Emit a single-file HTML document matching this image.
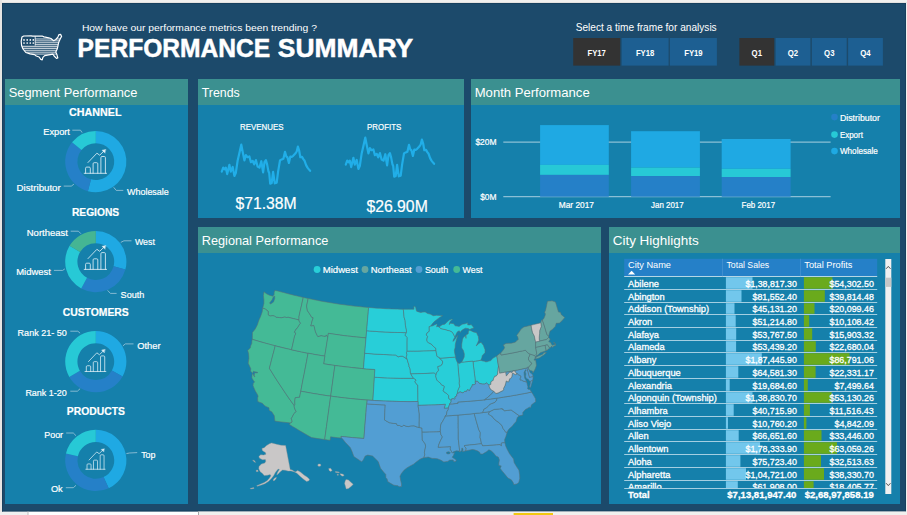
<!DOCTYPE html>
<html lang="en"><head><meta charset="utf-8"><title>Performance Summary</title>
<style>
html,body{margin:0;padding:0;background:#f1f0ee;}
body{width:907px;height:515px;overflow:hidden;}
svg{display:block;font-family:"Liberation Sans","DejaVu Sans",sans-serif;fill:#fff;}
svg text{fill:#fff;}
.tb text{stroke:#fff;stroke-width:0.3px;}
.lb text{stroke:#fff;stroke-width:0.2px;}
</style></head><body>
<svg width="907" height="515" viewBox="0 0 907 515">
<rect x="0.0" y="0.0" width="907.0" height="3.0" fill="#f1f0ee"/>
<rect x="0.0" y="2.0" width="907.0" height="1.0" fill="#e4e2e0"/>
<rect x="0.0" y="0.0" width="2.0" height="515.0" fill="#e6e5e3"/>
<rect x="2.0" y="3.0" width="904.0" height="508.5" fill="#1c4a6b"/>
<rect x="0.0" y="511.5" width="28.0" height="3.5" fill="#f0f0f0"/>
<rect x="28.0" y="511.5" width="170.5" height="3.5" fill="#ffffff"/>
<rect x="371.2" y="511.5" width="1.0" height="3.5" fill="#bdbdbd"/>
<rect x="2.0" y="510.5" width="904.0" height="1.0" fill="#173e5c"/>
<rect x="2.0" y="3.0" width="904.0" height="0.8" fill="#173e5c"/>
<rect x="2.0" y="3.0" width="0.8" height="508.5" fill="#173e5c"/>
<rect x="905.2" y="3.0" width="0.8" height="508.5" fill="#173e5c"/>
<rect x="198.5" y="511.5" width="708.5" height="3.5" fill="#f1f0ee"/>
<rect x="27.5" y="511.5" width="1.0" height="3.5" fill="#bdbdbd"/>
<rect x="198.0" y="511.5" width="1.0" height="3.5" fill="#a8a8a8"/>
<rect x="513.6" y="513.0" width="39.4" height="2.0" fill="#f2c811"/>
<rect x="5.0" y="79.0" width="183.0" height="425.0" fill="#1580ab"/>
<rect x="5.0" y="79.0" width="183.0" height="26.0" fill="#3b9090"/>
<text x="8.7" y="96.8" font-size="12.80" textLength="128.7" lengthAdjust="spacingAndGlyphs">Segment Performance</text>
<rect x="198.0" y="79.0" width="266.0" height="139.0" fill="#1580ab"/>
<rect x="198.0" y="79.0" width="266.0" height="26.0" fill="#3b9090"/>
<text x="201.7" y="96.8" font-size="12.80" textLength="38.0" lengthAdjust="spacingAndGlyphs">Trends</text>
<rect x="471.0" y="79.0" width="429.0" height="139.0" fill="#1580ab"/>
<rect x="471.0" y="79.0" width="429.0" height="26.0" fill="#3b9090"/>
<text x="474.7" y="96.8" font-size="12.80" textLength="115.0" lengthAdjust="spacingAndGlyphs">Month Performance</text>
<rect x="198.0" y="227.0" width="403.0" height="277.0" fill="#1580ab"/>
<rect x="198.0" y="227.0" width="403.0" height="26.0" fill="#3b9090"/>
<text x="201.7" y="244.8" font-size="12.80" textLength="126.7" lengthAdjust="spacingAndGlyphs">Regional Performance</text>
<rect x="609.0" y="227.0" width="291.0" height="277.0" fill="#1580ab"/>
<rect x="609.0" y="227.0" width="291.0" height="26.0" fill="#3b9090"/>
<text x="612.7" y="244.8" font-size="12.80" textLength="86.0" lengthAdjust="spacingAndGlyphs">City Highlights</text>
<text x="81.9" y="31.0" font-size="9.50" textLength="235.0" lengthAdjust="spacingAndGlyphs">How have our performance metrics been trending ?</text>
<text x="77.6" y="57.0" font-size="25.20" textLength="192.6" lengthAdjust="spacingAndGlyphs" font-weight="bold" stroke="#fff" stroke-width="0.5">PERFORMANCE</text>
<text x="277.8" y="57.0" font-size="25.20" textLength="135.4" lengthAdjust="spacingAndGlyphs" font-weight="bold" stroke="#fff" stroke-width="0.5">SUMMARY</text>
<text x="575.7" y="31.3" font-size="10.20" textLength="141.0" lengthAdjust="spacingAndGlyphs">Select a time frame for analysis</text>
<rect x="573.2" y="38.0" width="47.0" height="27.6" fill="#333333"/>
<text x="587.5" y="56.3" font-size="9.00" textLength="18.4" lengthAdjust="spacingAndGlyphs" font-weight="bold">FY17</text>
<rect x="621.6" y="38.0" width="47.0" height="27.6" fill="#1d5f92"/>
<text x="635.9" y="56.3" font-size="9.00" textLength="18.4" lengthAdjust="spacingAndGlyphs" font-weight="bold">FY18</text>
<rect x="669.9" y="38.0" width="47.0" height="27.6" fill="#1d5f92"/>
<text x="684.2" y="56.3" font-size="9.00" textLength="18.4" lengthAdjust="spacingAndGlyphs" font-weight="bold">FY19</text>
<rect x="739.4" y="38.0" width="34.8" height="27.6" fill="#333333"/>
<text x="751.6" y="56.3" font-size="9.00" textLength="10.4" lengthAdjust="spacingAndGlyphs" font-weight="bold">Q1</text>
<rect x="775.6" y="38.0" width="34.8" height="27.6" fill="#1d5f92"/>
<text x="787.8" y="56.3" font-size="9.00" textLength="10.4" lengthAdjust="spacingAndGlyphs" font-weight="bold">Q2</text>
<rect x="811.9" y="38.0" width="34.8" height="27.6" fill="#1d5f92"/>
<text x="824.1" y="56.3" font-size="9.00" textLength="10.4" lengthAdjust="spacingAndGlyphs" font-weight="bold">Q3</text>
<rect x="848.1" y="38.0" width="34.8" height="27.6" fill="#1d5f92"/>
<text x="860.3" y="56.3" font-size="9.00" textLength="10.4" lengthAdjust="spacingAndGlyphs" font-weight="bold">Q4</text>
<clipPath id="ic"><polygon points="21.9,37.1 23.7,36.0 31.0,35.8 32.8,36.2 42.6,36.2 44.0,36.9 48.8,37.8 50.9,38.5 53.7,40.7 55.8,39.5 57.9,37.1 59.0,34.6 60.7,34.4 61.6,36.4 60.4,38.5 59.3,40.9 58.5,43.0 57.9,46.2 57.2,49.0 55.8,52.1 56.9,54.6 57.8,58.0 56.5,58.4 54.1,56.0 53.0,54.2 48.8,54.9 44.7,55.6 42.9,57.4 42.2,59.8 40.8,59.4 39.1,57.0 36.3,56.0 34.5,54.6 30.0,53.9 25.8,52.5 23.0,49.0 21.6,45.5 21.2,41.3"/></clipPath>
<g clip-path="url(#ic)" stroke="#fff" stroke-width="0.8" fill="none">
<path d="M35.2,38.97H66"/>
<path d="M35.2,40.86H66"/>
<path d="M35.2,42.74H66"/>
<path d="M35.2,44.63H66"/>
<path d="M18,46.52H66" stroke="#b9c6d0" stroke-width="1.3"/>
<path d="M18.0,48.41H66"/>
<path d="M18.0,50.29H66"/>
<path d="M18.0,52.18H66"/>
<path d="M18.0,54.07H66"/>
<path d="M35.2,35V45.6"/>
</g>
<circle cx="24.0" cy="39.9" r="0.85" fill="#fff"/>
<circle cx="27.2" cy="39.9" r="0.85" fill="#fff"/>
<circle cx="30.3" cy="39.9" r="0.85" fill="#fff"/>
<circle cx="33.3" cy="39.9" r="0.85" fill="#fff"/>
<circle cx="24.0" cy="43.0" r="0.85" fill="#fff"/>
<circle cx="27.2" cy="43.0" r="0.85" fill="#fff"/>
<circle cx="30.3" cy="43.0" r="0.85" fill="#fff"/>
<circle cx="33.3" cy="43.0" r="0.85" fill="#fff"/>
<polygon points="21.9,37.1 23.7,36.0 31.0,35.8 32.8,36.2 42.6,36.2 44.0,36.9 48.8,37.8 50.9,38.5 53.7,40.7 55.8,39.5 57.9,37.1 59.0,34.6 60.7,34.4 61.6,36.4 60.4,38.5 59.3,40.9 58.5,43.0 57.9,46.2 57.2,49.0 55.8,52.1 56.9,54.6 57.8,58.0 56.5,58.4 54.1,56.0 53.0,54.2 48.8,54.9 44.7,55.6 42.9,57.4 42.2,59.8 40.8,59.4 39.1,57.0 36.3,56.0 34.5,54.6 30.0,53.9 25.8,52.5 23.0,49.0 21.6,45.5 21.2,41.3" fill="none" stroke="#fff" stroke-width="1.2" stroke-linejoin="round"/>
<g class="lb">
<text x="69.1" y="116.2" font-size="11.40" textLength="52.4" lengthAdjust="spacingAndGlyphs" font-weight="bold">CHANNEL</text>
<path d="M95.80,131.00 A30.60,30.60 0 1 1 87.88,191.16 L91.04,179.37 A18.40,18.40 0 1 0 95.80,143.20 Z" fill="#1fa9e3"/>
<path d="M87.88,191.16 A30.60,30.60 0 0 1 72.02,142.34 L81.50,150.02 A18.40,18.40 0 0 0 91.04,179.37 Z" fill="#2580c8"/>
<path d="M72.02,142.34 A30.60,30.60 0 0 1 95.80,131.00 L95.80,143.20 A18.40,18.40 0 0 0 81.50,150.02 Z" fill="#27c9d6"/>
<g transform="translate(95.8,165.1) scale(1.00)" fill="none" stroke="#dcedf5" stroke-width="0.85" stroke-linejoin="round" stroke-linecap="round">
<path d="M-11.6,8.2H10.8"/>
<path d="M-10.2,8.2V3.1a1.1,1.1 0 0 1 1.1,-1.1h2.5a1.1,1.1 0 0 1 1.1,1.1V8.2M-2.7,8.2V-1.3a1.1,1.1 0 0 1 1.1,-1.1h2.5a1.1,1.1 0 0 1 1.1,1.1V8.2M5.1,8.2V-7.5a1.1,1.1 0 0 1 1.1,-1.1h2.3a1.1,1.1 0 0 1 1.1,1.1V8.2"/>
<path d="M-7.8,-2.6L1.1,-11.9L3.9,-9.9L8.4,-14.3"/>
<path d="M9.8,-15.6L6.2,-14.9L9,-12.1Z" fill="#dcedf5" stroke-width="0.4"/>
</g>
<text x="43.3" y="135.1" font-size="9.80" textLength="26.6" lengthAdjust="spacingAndGlyphs">Export</text>
<polyline points="72.3,130.2 80.5,130.2 82.1,132.6" fill="none" stroke="#9fc6da" stroke-width="0.8"/>
<text x="16.6" y="190.8" font-size="9.80" textLength="44.1" lengthAdjust="spacingAndGlyphs">Distributor</text>
<polyline points="63.7,186.1 71.3,186.1 73.9,184.2" fill="none" stroke="#9fc6da" stroke-width="0.8"/>
<text x="127.0" y="194.8" font-size="9.80" textLength="41.8" lengthAdjust="spacingAndGlyphs">Wholesale</text>
<polyline points="123.3,190.4 116.2,190.4 113.7,187.3" fill="none" stroke="#9fc6da" stroke-width="0.8"/>
<text x="71.9" y="215.9" font-size="11.40" textLength="47.3" lengthAdjust="spacingAndGlyphs" font-weight="bold">REGIONS</text>
<path d="M95.80,231.00 A30.60,30.60 0 0 1 125.36,269.52 L113.57,266.36 A18.40,18.40 0 0 0 95.80,243.20 Z" fill="#1fa9e3"/>
<path d="M125.36,269.52 A30.60,30.60 0 0 1 81.20,288.49 L87.02,277.77 A18.40,18.40 0 0 0 113.57,266.36 Z" fill="#2580c8"/>
<path d="M81.20,288.49 A30.60,30.60 0 0 1 69.57,245.84 L80.03,252.12 A18.40,18.40 0 0 0 87.02,277.77 Z" fill="#27c9d6"/>
<path d="M69.57,245.84 A30.60,30.60 0 0 1 95.80,231.00 L95.80,243.20 A18.40,18.40 0 0 0 80.03,252.12 Z" fill="#45b593"/>
<g transform="translate(95.8,261.2) scale(1.00)" fill="none" stroke="#dcedf5" stroke-width="0.85" stroke-linejoin="round" stroke-linecap="round">
<path d="M-11.6,8.2H10.8"/>
<path d="M-10.2,8.2V3.1a1.1,1.1 0 0 1 1.1,-1.1h2.5a1.1,1.1 0 0 1 1.1,1.1V8.2M-2.7,8.2V-1.3a1.1,1.1 0 0 1 1.1,-1.1h2.5a1.1,1.1 0 0 1 1.1,1.1V8.2M5.1,8.2V-7.5a1.1,1.1 0 0 1 1.1,-1.1h2.3a1.1,1.1 0 0 1 1.1,1.1V8.2"/>
<path d="M-7.8,-2.6L1.1,-11.9L3.9,-9.9L8.4,-14.3"/>
<path d="M9.8,-15.6L6.2,-14.9L9,-12.1Z" fill="#dcedf5" stroke-width="0.4"/>
</g>
<text x="26.8" y="236.1" font-size="9.80" textLength="41.0" lengthAdjust="spacingAndGlyphs">Northeast</text>
<polyline points="70.7,231.2 78.4,231.2 80.9,233.7" fill="none" stroke="#9fc6da" stroke-width="0.8"/>
<text x="134.9" y="244.9" font-size="9.80" textLength="20.0" lengthAdjust="spacingAndGlyphs">West</text>
<polyline points="131.5,240.8 123.9,240.8 120.8,242.4" fill="none" stroke="#9fc6da" stroke-width="0.8"/>
<text x="16.2" y="274.9" font-size="9.80" textLength="34.7" lengthAdjust="spacingAndGlyphs">Midwest</text>
<polyline points="53.9,270.4 62.7,270.4 64.8,268.9" fill="none" stroke="#9fc6da" stroke-width="0.8"/>
<text x="120.6" y="297.9" font-size="9.80" textLength="23.7" lengthAdjust="spacingAndGlyphs">South</text>
<polyline points="116.6,293.4 110.4,293.4 107.6,290.4" fill="none" stroke="#9fc6da" stroke-width="0.8"/>
<text x="62.7" y="315.9" font-size="11.40" textLength="66.1" lengthAdjust="spacingAndGlyphs" font-weight="bold">CUSTOMERS</text>
<path d="M95.80,331.00 A30.60,30.60 0 0 1 122.56,376.44 L111.89,370.52 A18.40,18.40 0 0 0 95.80,343.20 Z" fill="#1fa9e3"/>
<path d="M122.56,376.44 A30.60,30.60 0 0 1 69.30,376.90 L79.87,370.80 A18.40,18.40 0 0 0 111.89,370.52 Z" fill="#2580c8"/>
<path d="M69.30,376.90 A30.60,30.60 0 0 1 95.80,331.00 L95.80,343.20 A18.40,18.40 0 0 0 79.87,370.80 Z" fill="#27c9d6"/>
<g transform="translate(95.8,363.9) scale(0.93)" fill="none" stroke="#dcedf5" stroke-width="0.85" stroke-linejoin="round" stroke-linecap="round">
<path d="M-11.6,8.2H10.8"/>
<path d="M-10.2,8.2V3.1a1.1,1.1 0 0 1 1.1,-1.1h2.5a1.1,1.1 0 0 1 1.1,1.1V8.2M-2.7,8.2V-1.3a1.1,1.1 0 0 1 1.1,-1.1h2.5a1.1,1.1 0 0 1 1.1,1.1V8.2M5.1,8.2V-7.5a1.1,1.1 0 0 1 1.1,-1.1h2.3a1.1,1.1 0 0 1 1.1,1.1V8.2"/>
<path d="M-7.8,-2.6L1.1,-11.9L3.9,-9.9L8.4,-14.3"/>
<path d="M9.8,-15.6L6.2,-14.9L9,-12.1Z" fill="#dcedf5" stroke-width="0.4"/>
</g>
<text x="17.6" y="336.1" font-size="9.80" textLength="49.2" lengthAdjust="spacingAndGlyphs">Rank 21- 50</text>
<polyline points="70.3,331.2 77.8,331.2 80.1,333.2" fill="none" stroke="#9fc6da" stroke-width="0.8"/>
<text x="137.2" y="349.0" font-size="9.80" textLength="23.4" lengthAdjust="spacingAndGlyphs">Other</text>
<polyline points="133.5,343.9 125.3,343.9 122.9,345.9" fill="none" stroke="#9fc6da" stroke-width="0.8"/>
<text x="25.4" y="395.9" font-size="9.80" textLength="41.4" lengthAdjust="spacingAndGlyphs">Rank 1-20</text>
<polyline points="70.3,391.2 77.4,391.2 80.1,388.7" fill="none" stroke="#9fc6da" stroke-width="0.8"/>
<text x="66.8" y="414.9" font-size="11.40" textLength="58.1" lengthAdjust="spacingAndGlyphs" font-weight="bold">PRODUCTS</text>
<path d="M95.80,429.80 A30.60,30.60 0 0 1 108.73,488.13 L103.58,477.08 A18.40,18.40 0 0 0 95.80,442.00 Z" fill="#1fa9e3"/>
<path d="M108.73,488.13 A30.60,30.60 0 0 1 65.98,453.52 L77.87,456.26 A18.40,18.40 0 0 0 103.58,477.08 Z" fill="#2580c8"/>
<path d="M65.98,453.52 A30.60,30.60 0 0 1 95.80,429.80 L95.80,442.00 A18.40,18.40 0 0 0 77.87,456.26 Z" fill="#27c9d6"/>
<g transform="translate(95.8,462.2) scale(0.86)" fill="none" stroke="#dcedf5" stroke-width="0.85" stroke-linejoin="round" stroke-linecap="round">
<path d="M-11.6,8.2H10.8"/>
<path d="M-10.2,8.2V3.1a1.1,1.1 0 0 1 1.1,-1.1h2.5a1.1,1.1 0 0 1 1.1,1.1V8.2M-2.7,8.2V-1.3a1.1,1.1 0 0 1 1.1,-1.1h2.5a1.1,1.1 0 0 1 1.1,1.1V8.2M5.1,8.2V-7.5a1.1,1.1 0 0 1 1.1,-1.1h2.3a1.1,1.1 0 0 1 1.1,1.1V8.2"/>
<path d="M-7.8,-2.6L1.1,-11.9L3.9,-9.9L8.4,-14.3"/>
<path d="M9.8,-15.6L6.2,-14.9L9,-12.1Z" fill="#dcedf5" stroke-width="0.4"/>
</g>
<text x="44.2" y="438.1" font-size="9.80" textLength="18.9" lengthAdjust="spacingAndGlyphs">Poor</text>
<polyline points="66.2,433.0 73.3,433.0 76.0,435.7" fill="none" stroke="#9fc6da" stroke-width="0.8"/>
<text x="141.2" y="458.1" font-size="9.80" textLength="14.3" lengthAdjust="spacingAndGlyphs">Top</text>
<polyline points="137.2,452.6 129.4,453.0 126.4,453.6" fill="none" stroke="#9fc6da" stroke-width="0.8"/>
<text x="50.9" y="491.8" font-size="9.80" textLength="11.8" lengthAdjust="spacingAndGlyphs">Ok</text>
<polyline points="65.8,487.7 73.3,487.7 76.0,485.3" fill="none" stroke="#9fc6da" stroke-width="0.8"/>
<text x="240.0" y="129.6" font-size="8.80" textLength="43.5" lengthAdjust="spacingAndGlyphs">REVENUES</text>
<text x="367.1" y="129.6" font-size="8.80" textLength="34.1" lengthAdjust="spacingAndGlyphs">PROFITS</text>
<text x="235.5" y="208.8" font-size="16.40" textLength="61.2" lengthAdjust="spacingAndGlyphs" stroke="#fff" stroke-width="0.45">$71.38M</text>
<text x="366.4" y="211.7" font-size="16.40" textLength="61.4" lengthAdjust="spacingAndGlyphs" stroke="#fff" stroke-width="0.45">$26.90M</text>
<polyline points="221.8,171.6 223.2,167.6 224.7,169.4 225.8,167.6 227.2,174.1 229.4,164.8 230.8,171.6 232.7,167.0 234.4,175.9 235.8,173.0 237.6,160.8 239.4,152.9 241.3,144.6 242.6,151.5 244.4,160.4 245.9,155.1 247.6,157.2 249.4,156.5 250.9,162.2 252.7,160.8 254.2,164.4 255.9,160.1 257.6,166.5 259.5,167.6 261.3,161.2 263.1,172.3 264.5,162.2 265.9,160.1 267.1,164.4 268.5,171.6 269.2,173.0 270.2,183.7 271.7,183.0 273.1,171.9 274.8,183.3 276.7,182.7 278.1,171.6 280.0,160.4 281.7,159.4 283.4,158.7 285.0,151.8 286.3,156.5 287.4,157.2 288.9,163.0 290.3,156.5 291.7,156.9 293.2,155.8 295.3,153.6 296.7,151.5 297.9,146.5 299.2,150.8 300.3,157.2 302.0,156.9 303.5,159.4 304.6,160.8 306.1,165.1 307.5,167.6 308.9,169.4 310.1,170.8" fill="none" stroke="#21aee8" stroke-width="2.2" stroke-linejoin="round" stroke-linecap="round"/>
<polyline transform="translate(124,-7)" points="221.8,171.6 223.2,167.6 224.7,169.4 225.8,167.6 227.2,174.1 229.4,164.8 230.8,171.6 232.7,167.0 234.4,175.9 235.8,173.0 237.6,160.8 239.4,152.9 241.3,144.6 242.6,151.5 244.4,160.4 245.9,155.1 247.6,157.2 249.4,156.5 250.9,162.2 252.7,160.8 254.2,164.4 255.9,160.1 257.6,166.5 259.5,167.6 261.3,161.2 263.1,172.3 264.5,162.2 265.9,160.1 267.1,164.4 268.5,171.6 269.2,173.0 270.2,183.7 271.7,183.0 273.1,171.9 274.8,183.3 276.7,182.7 278.1,171.6 280.0,160.4 281.7,159.4 283.4,158.7 285.0,151.8 286.3,156.5 287.4,157.2 288.9,163.0 290.3,156.5 291.7,156.9 293.2,155.8 295.3,153.6 296.7,151.5 297.9,146.5 299.2,150.8 300.3,157.2 302.0,156.9 303.5,159.4 304.6,160.8 306.1,165.1 307.5,167.6 308.9,169.4 310.1,170.8" fill="none" stroke="#21aee8" stroke-width="2.2" stroke-linejoin="round" stroke-linecap="round"/>
<rect x="503.3" y="141.6" width="327.3" height="1.0" fill="#a9cfe0"/>
<rect x="503.3" y="196.2" width="327.3" height="1.0" fill="#a9cfe0"/>
<text x="475.4" y="145.0" font-size="8.40" textLength="21.1" lengthAdjust="spacingAndGlyphs">$20M</text>
<text x="480.2" y="200.1" font-size="8.40" textLength="16.3" lengthAdjust="spacingAndGlyphs">$0M</text>
<rect x="540.1" y="125.1" width="68.7" height="39.8" fill="#1fa9e3"/>
<rect x="540.1" y="164.9" width="68.7" height="10.0" fill="#27c9d6"/>
<rect x="540.1" y="174.9" width="68.7" height="21.8" fill="#2580c8"/>
<rect x="631.1" y="131.2" width="68.8" height="36.4" fill="#1fa9e3"/>
<rect x="631.1" y="167.6" width="68.8" height="8.5" fill="#27c9d6"/>
<rect x="631.1" y="176.1" width="68.8" height="20.6" fill="#2580c8"/>
<rect x="721.7" y="139.0" width="68.9" height="29.8" fill="#1fa9e3"/>
<rect x="721.7" y="168.8" width="68.9" height="8.2" fill="#27c9d6"/>
<rect x="721.7" y="177.0" width="68.9" height="19.7" fill="#2580c8"/>
<text x="558.8" y="207.6" font-size="8.40" textLength="35.2" lengthAdjust="spacingAndGlyphs">Mar 2017</text>
<text x="651.0" y="207.6" font-size="8.40" textLength="32.7" lengthAdjust="spacingAndGlyphs">Jan 2017</text>
<text x="741.6" y="207.6" font-size="8.40" textLength="33.5" lengthAdjust="spacingAndGlyphs">Feb 2017</text>
<circle cx="834.5" cy="117.1" r="3.3" fill="#2580c8"/>
<text x="839.9" y="120.8" font-size="8.60" textLength="40.0" lengthAdjust="spacingAndGlyphs">Distributor</text>
<circle cx="834.5" cy="134.6" r="3.3" fill="#27c9d6"/>
<text x="839.9" y="137.7" font-size="8.60" textLength="23.0" lengthAdjust="spacingAndGlyphs">Export</text>
<circle cx="834.5" cy="151.1" r="3.3" fill="#1fa9e3"/>
<text x="839.9" y="154.0" font-size="8.60" textLength="38.0" lengthAdjust="spacingAndGlyphs">Wholesale</text>
<circle cx="317.1" cy="269.5" r="3.4" fill="#28ced8"/>
<text x="322.7" y="273.1" font-size="9.90" textLength="35.2" lengthAdjust="spacingAndGlyphs">Midwest</text>
<circle cx="365.0" cy="269.5" r="3.4" fill="#66a6a0"/>
<text x="370.8" y="273.1" font-size="9.90" textLength="40.9" lengthAdjust="spacingAndGlyphs">Northeast</text>
<circle cx="419.0" cy="269.5" r="3.4" fill="#529ed3"/>
<text x="424.9" y="273.1" font-size="9.90" textLength="23.4" lengthAdjust="spacingAndGlyphs">South</text>
<circle cx="456.7" cy="269.5" r="3.4" fill="#44ba96"/>
<text x="462.6" y="273.1" font-size="9.90" textLength="19.9" lengthAdjust="spacingAndGlyphs">West</text>
</g>
<g stroke="#5a6f74" stroke-width="0.55" stroke-linejoin="round">
<g fill="#44ba96">
<path d="M262.7,308.2 263.4,305.4 263.9,303.5 263.9,299.9 263.4,295.4 264.0,291.8 266.1,293.5 267.8,294.4 269.6,295.3 271.2,295.7 272.8,296.2 274.1,294.6 274.2,292.3 274.9,290.4 277.9,291.0 280.7,291.8 283.5,292.5 286.3,293.3 289.1,294.0 292.0,294.7 294.8,295.4 297.6,296.1 300.5,296.8 303.3,297.4 302.4,301.3 301.6,305.1 300.7,308.9 299.8,312.7 299.0,316.6 299.0,318.3 298.9,319.9 296.2,319.3 293.5,318.6 290.8,318.0 288.2,317.3 286.4,317.5 284.8,317.1 283.1,317.4 281.3,317.8 279.7,317.6 277.6,317.4 275.9,317.3 274.6,316.0 272.5,315.7 270.1,316.1 268.0,314.7 268.2,313.0 268.2,311.3 266.8,310.4 265.5,309.0Z"/>
<path d="M262.7,308.2 265.5,309.0 266.8,310.4 268.2,311.3 268.2,313.0 268.0,314.7 270.1,316.1 272.5,315.7 274.6,316.0 275.9,317.3 277.6,317.4 279.7,317.6 281.3,317.8 283.1,317.4 284.8,317.1 286.4,317.5 288.2,317.3 290.8,318.0 293.5,318.6 296.2,319.3 298.9,319.9 299.3,321.4 300.6,323.2 299.6,324.3 298.8,325.8 297.5,327.7 297.0,328.6 296.1,329.1 294.4,332.2 295.7,332.9 295.4,334.6 294.6,336.2 293.6,340.7 292.6,345.2 291.5,349.8 288.2,349.0 285.0,348.2 281.7,347.4 278.4,346.6 275.1,345.8 271.8,344.9 268.5,344.1 265.3,343.2 262.0,342.2 258.8,341.3 255.5,340.3 252.3,339.4 252.4,335.4 252.4,332.6 255.2,329.0 256.3,326.9 257.4,324.8 258.2,322.2 259.1,319.7 260.7,316.2 262.2,311.8Z"/>
<path d="M274.9,421.1 274.6,418.5 274.3,415.7 271.9,411.9 269.1,410.2 269.0,407.8 266.9,406.9 264.9,405.9 262.3,403.2 260.0,402.4 257.8,401.6 257.6,398.0 258.1,396.1 257.1,393.9 255.3,391.0 254.1,388.2 253.0,385.5 253.3,383.2 254.6,381.9 253.4,380.4 251.9,378.0 252.0,375.6 252.6,373.3 250.5,371.1 250.8,368.8 249.5,366.0 248.2,363.2 248.5,360.9 248.9,358.5 248.8,356.1 248.6,353.6 247.7,350.6 250.4,347.7 250.6,346.1 251.8,343.2 251.8,341.2 252.3,339.4 255.1,340.2 258.0,341.1 260.8,341.9 263.7,342.7 266.6,343.5 269.5,344.3 272.3,345.1 275.2,345.8 274.1,350.3 272.9,354.8 271.7,359.3 270.6,363.8 269.4,368.3 272.0,372.5 274.6,376.7 277.3,380.9 280.0,385.0 282.8,389.2 285.6,393.4 288.4,397.5 291.3,401.6 294.3,405.7 294.2,406.9 294.9,409.0 295.4,410.3 296.3,411.6 295.1,412.6 294.0,413.5 292.9,415.7 292.2,417.1 291.3,418.5 292.0,420.8 292.1,422.0 290.9,422.9 290.3,422.9 287.2,422.6 284.1,422.2 281.1,421.9 278.0,421.5Z"/>
<path d="M275.2,345.8 278.5,346.7 281.8,347.5 285.0,348.3 288.3,349.0 291.6,349.8 294.9,350.5 298.2,351.2 301.5,351.9 304.8,352.6 308.1,353.2 307.3,357.4 306.5,361.6 305.7,365.9 304.9,370.1 304.1,374.3 303.2,378.5 302.4,382.8 301.6,387.0 300.8,391.2 300.2,394.3 299.6,397.3 297.6,397.4 295.2,397.8 294.8,401.1 294.9,404.6 294.3,405.7 291.3,401.6 288.4,397.5 285.6,393.4 282.8,389.2 280.0,385.0 277.3,380.9 274.6,376.7 272.0,372.5 269.4,368.3 270.6,363.8 271.7,359.3 272.9,354.8 274.1,350.3Z"/>
<path d="M303.3,297.4 305.8,298.0 308.2,298.5 307.4,302.3 306.6,306.1 307.4,310.6 308.8,312.7 310.3,314.9 311.5,317.1 313.2,317.8 312.1,321.1 311.5,323.5 310.8,325.9 313.9,325.4 314.7,328.6 315.5,331.9 317.3,335.7 317.9,336.5 321.1,335.6 323.3,336.0 325.4,336.3 326.3,334.9 327.8,337.3 327.2,341.1 326.6,344.9 326.0,348.6 325.4,352.4 324.8,356.1 321.4,355.6 318.1,355.0 314.8,354.5 311.4,353.8 308.1,353.2 304.8,352.6 301.5,351.9 298.2,351.2 294.9,350.5 291.5,349.8 292.6,345.2 293.6,340.7 294.6,336.2 295.4,334.6 295.7,332.9 294.4,332.2 296.1,329.1 297.0,328.6 297.5,327.7 298.8,325.8 299.6,324.3 300.6,323.2 299.3,321.4 298.9,319.9 299.0,318.3 299.0,316.6 299.8,312.7 300.7,308.9 301.6,305.1 302.4,301.3Z"/>
<path d="M308.2,298.5 311.2,299.1 314.2,299.7 317.2,300.3 320.2,300.9 323.2,301.5 326.2,302.0 329.2,302.5 332.2,303.0 335.2,303.5 338.3,304.0 341.3,304.4 344.3,304.8 347.3,305.2 350.4,305.6 353.4,306.0 356.5,306.3 359.5,306.6 362.5,306.9 365.6,307.2 368.6,307.5 368.3,311.8 367.9,316.2 367.5,320.5 367.1,324.8 366.8,329.2 366.4,333.6 366.0,337.9 362.9,337.6 359.7,337.3 356.6,337.0 353.5,336.7 350.3,336.3 347.2,336.0 344.1,335.6 340.9,335.2 337.8,334.7 334.7,334.3 331.5,333.8 328.4,333.3 327.8,337.3 326.3,334.9 325.4,336.3 323.3,336.0 321.1,335.6 317.9,336.5 317.3,335.7 315.5,331.9 314.7,328.6 313.9,325.4 310.8,325.9 311.5,323.5 312.1,321.1 313.2,317.8 311.5,317.1 310.3,314.9 308.8,312.7 307.4,310.6 306.6,306.1 307.4,302.3Z"/>
<path d="M328.4,333.3 331.5,333.8 334.7,334.3 337.8,334.7 340.9,335.2 344.1,335.6 347.2,336.0 350.3,336.3 353.5,336.7 356.6,337.0 359.7,337.3 362.9,337.6 366.0,337.9 365.7,342.3 365.3,346.7 364.9,351.1 364.5,355.5 364.2,359.8 363.8,364.2 363.4,368.6 360.1,368.4 356.8,368.0 353.4,367.7 350.1,367.4 346.8,367.0 343.4,366.6 340.1,366.2 336.8,365.7 333.5,365.3 330.2,364.8 326.9,364.3 323.6,363.8 324.3,359.4 324.9,355.1 325.6,350.7 326.3,346.4 327.0,342.0 327.7,337.7Z"/>
<path d="M308.1,353.2 311.4,353.8 314.8,354.5 318.1,355.0 321.4,355.6 324.8,356.1 324.2,360.0 323.6,363.8 326.4,364.2 329.2,364.7 332.1,365.1 334.9,365.5 334.3,369.8 333.7,374.2 333.1,378.6 332.5,383.0 331.9,387.4 331.3,391.8 330.7,396.1 327.3,395.7 324.0,395.2 320.7,394.7 317.4,394.1 314.0,393.6 310.7,393.0 307.4,392.4 304.1,391.8 300.8,391.2 301.6,387.0 302.4,382.8 303.2,378.5 304.1,374.3 304.9,370.1 305.7,365.9 306.5,361.6 307.3,357.4Z"/>
<path d="M334.9,365.5 338.2,365.9 341.5,366.3 344.9,366.8 348.2,367.1 351.5,367.5 354.9,367.9 358.2,368.2 361.5,368.5 364.9,368.8 368.2,369.0 371.5,369.3 374.9,369.5 374.6,373.9 374.3,378.3 374.0,382.7 373.8,387.2 373.5,391.6 373.2,396.0 372.9,400.4 369.4,400.2 365.8,399.9 362.3,399.6 358.8,399.3 355.3,399.0 351.7,398.7 348.2,398.3 344.7,397.9 341.2,397.5 337.7,397.1 334.2,396.6 330.7,396.1 331.3,391.8 331.9,387.4 332.5,383.0 333.1,378.6 333.7,374.2 334.3,369.8Z"/>
<path d="M300.8,391.2 304.1,391.8 307.4,392.4 310.7,393.0 314.0,393.6 317.4,394.1 320.7,394.7 324.0,395.2 327.3,395.7 330.7,396.1 330.1,400.5 329.5,404.8 328.9,409.2 328.3,413.5 327.7,417.9 327.1,422.2 326.5,426.5 325.9,430.9 325.3,435.2 324.7,439.5 321.4,439.1 318.1,438.6 314.9,438.1 311.6,437.6 308.4,435.8 305.2,433.9 302.0,432.1 298.8,430.2 295.7,428.3 292.5,426.4 289.4,424.4 290.3,422.9 290.9,422.9 292.1,422.0 292.0,420.8 291.3,418.5 292.2,417.1 292.9,415.7 294.0,413.5 295.1,412.6 296.3,411.6 295.4,410.3 294.9,409.0 294.2,406.9 294.3,405.7 294.9,404.6 294.8,401.1 295.2,397.8 297.6,397.4 299.6,397.3 300.2,394.3Z"/>
<path d="M330.7,396.1 334.0,396.6 337.3,397.0 340.6,397.4 343.9,397.8 347.2,398.2 350.5,398.5 353.9,398.9 357.2,399.2 360.5,399.5 363.8,399.8 367.2,400.0 366.9,403.9 366.3,408.2 366.0,412.5 365.6,416.9 365.3,421.2 364.9,425.5 364.6,429.9 364.3,434.2 363.9,438.5 360.1,438.2 356.3,437.9 352.4,437.6 348.6,437.2 344.8,436.8 341.0,436.4 341.4,438.1 337.8,437.7 334.2,437.3 330.6,436.8 330.1,440.3 327.4,439.9 324.7,439.5 325.3,435.2 325.9,430.9 326.5,426.5 327.1,422.2 327.7,417.9 328.3,413.5 328.9,409.2 329.5,404.8 330.1,400.5Z"/>
</g>
<g fill="#28ced8">
<path d="M374.4,377.2 377.6,377.4 380.9,377.6 384.2,377.8 387.4,377.9 390.7,378.0 394.0,378.1 397.2,378.2 400.5,378.3 403.8,378.3 407.1,378.3 410.3,378.3 413.6,378.3 415.1,379.2 416.1,380.1 414.9,381.7 416.0,383.6 417.8,385.2 417.8,389.3 417.9,393.3 417.9,397.4 418.0,401.5 414.5,401.5 411.0,401.6 407.6,401.6 404.1,401.5 400.6,401.5 397.2,401.4 393.7,401.3 390.2,401.2 386.8,401.1 383.3,401.0 379.8,400.8 376.4,400.6 372.9,400.4 373.2,395.8 373.5,391.1 373.8,386.5 374.1,381.9Z"/>
<path d="M364.7,353.3 367.8,353.5 370.9,353.7 374.0,354.0 377.1,354.2 380.2,354.3 383.3,354.5 386.4,354.6 389.5,354.8 392.5,354.9 395.6,355.0 396.7,355.8 398.4,356.8 400.6,356.2 402.3,356.2 404.0,357.0 405.7,358.2 407.1,359.1 407.6,360.9 408.2,362.9 409.0,365.2 409.0,366.4 410.0,368.6 410.3,370.6 410.4,373.1 410.9,373.9 411.9,376.0 413.6,378.3 410.3,378.3 407.1,378.3 403.8,378.3 400.5,378.3 397.2,378.2 394.0,378.1 390.7,378.0 387.4,377.9 384.2,377.8 380.9,377.6 377.6,377.4 374.4,377.2 374.6,373.4 374.9,369.5 372.0,369.3 369.2,369.1 366.3,368.9 363.4,368.6 363.8,364.8 364.1,360.9 364.4,357.1Z"/>
<path d="M366.6,330.7 369.7,331.0 372.8,331.2 375.8,331.4 378.9,331.7 381.9,331.8 385.0,332.0 388.1,332.1 391.1,332.3 394.2,332.4 397.3,332.5 400.3,332.5 403.4,332.6 406.5,332.6 405.0,335.1 407.2,337.5 407.1,342.1 407.1,346.7 407.1,351.3 406.4,352.8 407.0,354.8 406.2,357.1 407.1,359.1 405.7,358.2 404.0,357.0 402.3,356.2 400.6,356.2 398.4,356.8 396.7,355.8 395.6,355.0 392.5,354.9 389.5,354.8 386.4,354.6 383.3,354.5 380.2,354.3 377.1,354.2 374.0,354.0 370.9,353.7 367.8,353.5 364.7,353.3 365.1,348.7 365.5,344.2 365.9,339.7 366.3,335.2Z"/>
<path d="M368.6,307.5 371.5,307.7 374.4,308.0 377.3,308.2 380.2,308.3 383.1,308.5 386.0,308.7 388.8,308.8 391.7,308.9 394.6,309.0 397.5,309.1 400.4,309.2 403.3,309.2 403.7,313.0 404.1,317.3 405.1,320.6 405.3,322.9 405.4,325.2 405.9,327.5 406.4,329.8 406.5,332.6 403.4,332.6 400.3,332.5 397.3,332.5 394.2,332.4 391.1,332.3 388.1,332.1 385.0,332.0 381.9,331.8 378.9,331.7 375.8,331.4 372.8,331.2 369.7,331.0 366.6,330.7 367.0,326.8 367.3,323.0 367.6,319.1 368.0,315.2 368.3,311.4Z"/>
<path d="M403.3,309.2 406.0,309.2 408.6,309.2 411.3,309.2 413.9,309.2 413.9,306.3 414.9,306.5 415.6,306.9 416.2,310.0 416.7,311.3 418.8,311.9 420.9,312.5 422.9,312.1 425.2,311.9 427.6,313.5 430.2,314.1 433.3,315.7 435.0,315.5 436.7,315.3 438.6,315.4 440.6,315.5 442.7,315.7 440.8,316.8 439.0,317.9 436.4,319.9 434.3,321.6 432.3,323.8 430.6,326.2 429.2,326.7 429.3,331.1 428.5,332.0 427.1,332.9 426.3,334.9 427.6,336.4 426.9,339.1 427.0,341.4 428.5,342.7 431.3,344.1 433.5,346.5 435.8,348.3 436.0,350.6 432.8,350.8 429.6,350.9 426.4,351.0 423.2,351.1 420.0,351.2 416.7,351.3 413.5,351.3 410.3,351.3 407.1,351.3 407.1,346.7 407.1,342.1 407.2,337.5 405.0,335.1 406.5,332.6 406.4,329.8 405.9,327.5 405.4,325.2 405.3,322.9 405.1,320.6 404.1,317.3 403.7,313.0Z"/>
<path d="M407.1,351.3 410.3,351.3 413.5,351.3 416.7,351.3 420.0,351.2 423.2,351.1 426.4,351.0 429.6,350.9 432.8,350.8 436.0,350.6 436.2,352.2 436.6,354.1 437.0,356.4 439.3,357.4 439.7,358.2 441.0,359.6 442.5,361.1 442.6,363.1 441.7,365.0 440.5,365.9 437.8,366.6 438.2,368.7 438.6,370.2 437.8,371.4 436.5,372.8 436.1,374.8 434.2,373.1 430.9,373.2 427.6,373.4 424.2,373.5 420.9,373.6 417.6,373.7 414.2,373.8 410.9,373.9 410.4,373.1 410.3,370.6 410.0,368.6 409.0,366.4 409.0,365.2 408.2,362.9 407.6,360.9 407.1,359.1 406.2,357.1 407.0,354.8 406.4,352.8Z"/>
<path d="M410.9,373.9 414.2,373.8 417.6,373.7 420.9,373.6 424.2,373.5 427.6,373.4 430.9,373.2 434.2,373.1 436.1,374.8 435.7,376.2 436.3,378.2 436.8,380.0 438.6,381.8 440.6,383.3 441.4,384.8 442.5,385.3 444.0,385.9 444.4,386.6 444.1,387.9 443.2,390.5 444.2,392.0 446.6,393.4 448.7,395.6 448.7,397.9 449.2,399.0 451.2,400.2 451.1,402.0 450.1,403.2 449.7,404.0 449.3,405.2 448.8,406.4 448.3,408.0 446.2,408.2 444.2,408.3 445.3,404.3 441.9,404.5 438.5,404.7 435.1,404.9 431.6,405.0 428.2,405.1 424.8,405.2 421.4,405.3 418.0,405.4 418.0,401.5 417.9,397.4 417.9,393.3 417.8,389.3 417.8,385.2 416.0,383.6 414.9,381.7 416.1,380.1 415.1,379.2 413.6,378.3 411.9,376.0Z"/>
<path d="M480.7,360.3 482.8,361.0 485.0,361.2 485.2,361.8 487.1,361.8 488.1,361.3 490.8,360.6 492.8,358.3 495.3,356.8 496.8,355.9 497.4,359.3 497.9,362.7 498.5,366.1 498.3,367.7 498.2,368.8 498.1,370.7 497.8,372.0 497.8,374.0 496.1,376.2 494.6,376.3 494.2,377.6 493.3,379.0 493.4,380.2 492.6,380.7 491.0,381.7 490.8,384.5 489.1,385.0 487.4,383.8 486.4,382.9 484.7,384.1 482.3,384.1 479.2,383.3 477.5,381.2 475.3,381.4 474.9,377.4 474.4,373.4 473.9,369.4 473.4,365.5 473.0,361.5 475.5,361.1 478.1,360.7Z"/>
<path d="M457.7,363.0 459.6,363.4 461.6,362.2 464.4,361.9 467.3,361.6 470.1,361.3 472.9,361.0 473.0,361.5 473.4,365.5 473.9,369.4 474.4,373.4 474.9,377.4 475.3,381.4 475.3,383.0 475.7,383.9 473.5,384.8 472.4,384.6 472.1,386.1 470.5,388.4 469.6,390.6 467.4,389.7 466.4,391.5 464.6,391.3 462.9,393.0 460.0,391.8 457.8,393.5 457.3,393.4 457.7,390.8 458.6,388.5 459.7,386.3 459.0,383.1 459.3,381.2 458.9,376.6 458.5,372.1 458.1,367.6Z"/>
<path d="M455.6,357.0 455.7,358.6 457.0,361.7 457.7,363.0 458.1,367.6 458.5,372.1 458.9,376.6 459.3,381.2 459.0,383.1 459.7,386.3 458.6,388.5 457.7,390.8 457.3,393.4 456.8,394.2 456.7,396.0 454.9,396.9 455.2,398.6 454.4,399.2 453.5,398.7 451.6,398.9 451.2,400.2 449.2,399.0 448.7,397.9 448.7,395.6 446.6,393.4 444.2,392.0 443.2,390.5 444.1,387.9 444.4,386.6 444.0,385.9 442.5,385.3 441.4,384.8 440.6,383.3 438.6,381.8 436.8,380.0 436.3,378.2 435.7,376.2 436.1,374.8 436.5,372.8 437.8,371.4 438.6,370.2 438.2,368.7 437.8,366.6 440.5,365.9 441.7,365.0 442.6,363.1 442.5,361.1 441.0,359.6 439.7,358.2 442.9,358.0 446.0,357.8 449.2,357.5 452.4,357.3Z"/>
<path d="M455.6,357.0 454.7,353.0 454.4,350.2 455.2,347.4 455.3,344.7 455.9,341.9 456.7,338.8 458.0,335.3 456.3,337.3 454.4,340.1 453.1,341.4 453.3,339.8 454.5,337.8 454.9,337.0 454.0,335.2 453.3,333.7 452.0,331.9 449.6,330.7 447.9,330.5 446.3,329.8 443.5,329.2 440.8,328.5 439.1,326.9 437.3,326.4 436.6,326.8 437.2,324.5 436.6,324.0 434.8,324.8 432.8,325.8 430.6,326.2 429.2,326.7 429.3,331.1 428.5,332.0 427.1,332.9 426.3,334.9 427.6,336.4 426.9,339.1 427.0,341.4 428.5,342.7 431.3,344.1 433.5,346.5 435.8,348.3 436.0,350.6 436.2,352.2 436.6,354.1 437.0,356.4 439.3,357.4 439.7,358.2 442.9,358.0 446.0,357.8 449.2,357.5 452.4,357.3Z"/>
<path d="M439.1,326.9 440.7,325.8 442.2,324.7 444.8,324.2 446.8,322.3 449.2,320.0 452.0,319.0 452.6,319.5 450.4,321.2 449.5,322.9 449.2,324.6 450.6,323.3 452.2,323.4 453.8,323.8 455.1,325.8 457.1,326.1 459.1,326.4 460.7,325.3 462.3,324.2 464.9,323.8 467.7,322.8 467.7,324.9 469.8,324.9 471.1,324.5 472.7,326.2 474.0,328.0 471.9,328.5 469.7,329.5 468.1,328.5 465.4,328.2 462.9,329.6 461.1,331.0 460.2,332.6 459.2,330.8 457.4,331.8 456.3,333.8 454.9,337.0 454.0,335.2 453.3,333.7 452.0,331.9 449.6,330.7 447.9,330.5 446.3,329.8 443.5,329.2 440.8,328.5ZM480.7,360.3 481.8,358.0 482.3,355.6 485.0,352.7 485.1,349.8 484.2,347.5 483.4,345.3 481.0,342.2 478.7,343.6 476.2,345.9 477.8,342.6 478.8,340.1 478.3,336.3 477.4,334.8 476.7,332.7 473.4,331.9 471.6,331.1 469.8,330.2 468.4,331.0 468.2,333.7 465.9,335.1 466.0,338.4 465.6,335.2 463.2,337.7 462.5,339.4 462.1,341.9 461.7,344.5 461.7,347.9 463.4,350.6 464.3,353.9 464.2,357.0 462.7,360.2 461.6,362.2 464.4,361.9 467.3,361.6 470.1,361.3 472.9,361.0 473.0,361.5 475.5,361.1 478.1,360.7Z"/>
</g>
<g fill="#529ed3">
<path d="M366.6,403.8 369.7,404.1 372.8,404.3 375.9,404.5 379.0,404.6 382.1,404.8 385.2,404.9 385.0,408.7 384.8,412.4 384.7,416.2 384.5,419.9 387.0,421.4 389.4,422.7 391.0,422.9 393.2,423.4 396.4,423.6 397.3,425.4 399.5,425.5 402.0,426.7 403.6,425.1 406.0,426.2 408.3,426.6 410.8,425.9 414.0,425.8 416.5,426.8 419.2,427.5 422.0,428.1 422.1,432.2 422.2,436.2 422.3,440.1 423.2,441.2 425.2,443.9 425.6,446.3 425.3,448.1 424.7,450.8 424.4,452.7 424.8,454.6 423.9,457.7 422.2,458.2 419.6,459.4 418.3,460.5 415.6,462.5 413.6,464.2 410.3,465.9 406.9,467.9 404.2,470.1 402.4,472.2 401.4,473.5 400.0,476.2 400.6,480.0 401.5,483.8 401.6,486.4 399.1,486.8 398.1,485.8 396.0,485.5 393.9,485.2 390.1,483.1 387.7,481.5 387.1,478.9 385.9,477.7 385.7,474.3 384.0,472.6 380.5,468.2 379.3,464.8 378.3,461.7 376.2,459.6 372.6,456.1 370.2,455.6 367.8,455.1 365.2,456.0 363.1,460.2 361.6,461.7 359.6,460.4 357.6,459.1 355.7,457.8 353.8,456.5 352.2,452.0 350.4,447.8 347.9,445.1 345.4,442.4 342.3,438.6 341.4,438.1 341.0,436.4 344.8,436.8 348.6,437.2 352.4,437.6 356.3,437.9 360.1,438.2 363.9,438.5 364.3,434.2 364.6,429.9 364.9,425.5 365.3,421.2 365.6,416.9 366.0,412.5 366.3,408.2Z"/>
<path d="M367.2,400.0 370.8,400.3 374.4,400.5 378.0,400.7 381.7,400.9 385.3,401.1 388.9,401.2 392.5,401.3 396.2,401.4 399.8,401.5 403.4,401.5 407.1,401.6 410.7,401.6 414.3,401.5 418.0,401.5 418.0,405.4 418.7,409.6 419.3,413.9 419.3,418.4 419.2,422.9 419.2,427.5 416.5,426.8 414.0,425.8 410.8,425.9 408.3,426.6 406.0,426.2 403.6,425.1 402.0,426.7 399.5,425.5 397.3,425.4 396.4,423.6 393.2,423.4 391.0,422.9 389.4,422.7 387.0,421.4 384.5,419.9 384.7,416.2 384.8,412.4 385.0,408.7 385.2,404.9 381.5,404.8 377.8,404.6 374.2,404.4 370.5,404.1 366.9,403.9Z"/>
<path d="M418.0,405.4 421.4,405.3 424.8,405.2 428.2,405.1 431.6,405.0 435.1,404.9 438.5,404.7 441.9,404.5 445.3,404.3 444.2,408.3 446.2,408.2 448.3,408.0 448.4,409.2 447.0,411.6 446.4,414.9 445.1,416.0 445.1,417.1 443.5,419.7 442.6,421.5 441.4,423.2 440.6,425.5 440.4,428.6 440.4,431.7 436.8,431.9 433.1,432.0 429.4,432.1 425.8,432.2 422.1,432.2 422.0,428.1 419.2,427.5 419.2,422.9 419.3,418.4 419.3,413.9 418.7,409.6Z"/>
<path d="M422.1,432.2 425.8,432.2 429.4,432.1 433.1,432.0 436.8,431.9 440.4,431.7 441.0,434.8 442.4,436.9 441.6,438.6 440.7,440.2 439.5,442.9 438.6,445.3 438.2,447.3 441.3,447.1 444.4,446.9 447.5,446.8 450.6,446.6 450.2,449.1 451.2,450.8 451.9,452.3 452.4,452.8 454.6,452.8 453.4,455.6 452.2,457.2 456.4,460.0 455.5,461.6 453.9,461.7 453.1,459.9 449.7,460.1 447.8,461.4 445.8,461.7 443.8,462.0 441.0,460.2 437.3,458.8 434.9,458.5 432.2,458.4 430.2,457.8 428.2,457.1 426.1,457.4 423.9,457.7 424.8,454.6 424.4,452.7 424.7,450.8 425.3,448.1 425.6,446.3 425.2,443.9 423.2,441.2 422.3,440.1 422.2,436.2Z"/>
<path d="M445.1,416.0 448.3,415.8 451.6,415.6 454.8,415.3 458.1,415.1 458.2,419.1 458.2,423.1 458.2,427.1 458.3,431.1 458.3,435.1 458.3,439.1 458.8,443.3 459.3,447.6 459.8,451.9 459.1,451.1 456.4,450.8 453.5,451.8 452.4,452.8 451.9,452.3 451.2,450.8 450.2,449.1 450.6,446.6 447.5,446.8 444.4,446.9 441.3,447.1 438.2,447.3 438.6,445.3 439.5,442.9 440.7,440.2 441.6,438.6 442.4,436.9 441.0,434.8 440.4,431.7 440.4,428.6 440.6,425.5 441.4,423.2 442.6,421.5 443.5,419.7 445.1,417.1Z"/>
<path d="M458.1,415.1 461.3,414.8 464.6,414.5 467.8,414.2 471.0,413.9 474.2,413.5 475.3,417.5 476.4,421.5 477.6,425.6 478.7,429.6 480.3,432.5 480.2,435.4 480.0,437.3 480.7,439.6 481.5,443.7 478.1,444.1 474.7,444.5 471.3,444.8 468.0,445.2 464.6,445.5 464.5,446.5 466.1,448.0 466.0,450.0 465.6,450.9 464.1,451.2 462.4,451.6 463.0,449.9 462.7,448.3 461.8,448.2 461.7,450.5 461.1,450.9 459.8,451.9 459.3,447.6 458.8,443.3 458.3,439.1 458.3,435.1 458.3,431.1 458.2,427.1 458.2,423.1 458.2,419.1Z"/>
<path d="M474.2,413.5 476.9,413.2 479.5,413.0 482.2,412.7 484.7,412.3 487.2,412.0 489.7,411.6 488.4,414.1 490.5,415.4 492.1,416.3 493.9,418.8 496.7,421.1 498.5,422.3 501.9,425.4 503.0,428.4 505.1,431.2 505.5,432.1 507.2,432.2 505.9,436.5 504.6,439.7 504.9,442.8 503.2,442.8 501.3,443.1 501.4,446.1 500.1,444.6 496.6,444.9 493.1,445.2 489.7,445.4 486.2,445.6 482.7,445.9 481.5,443.7 480.7,439.6 480.0,437.3 480.2,435.4 480.3,432.5 478.7,429.6 477.6,425.6 476.4,421.5 475.3,417.5Z"/>
<path d="M481.5,443.7 482.7,445.9 486.2,445.6 489.7,445.4 493.1,445.2 496.6,444.9 500.1,444.6 501.4,446.1 501.3,443.1 503.2,442.8 504.9,442.8 505.7,445.9 507.3,449.5 508.5,451.7 509.6,453.8 511.6,456.4 513.6,459.0 514.1,462.4 515.3,464.5 516.5,466.6 518.9,470.1 519.6,474.6 519.8,478.4 518.8,482.5 516.9,483.9 513.8,484.6 513.2,482.6 511.3,479.8 507.9,478.0 505.7,475.3 504.0,473.2 502.3,471.2 500.2,468.4 501.2,465.9 498.8,465.5 498.8,463.2 499.4,460.0 498.3,457.1 496.1,456.2 493.3,452.7 491.0,450.7 488.9,449.8 486.8,451.6 484.7,452.8 482.7,454.0 480.4,454.1 479.8,452.4 477.7,451.0 474.2,449.7 472.2,449.5 469.9,450.0 467.7,450.4 465.6,450.9 466.0,450.0 466.1,448.0 464.5,446.5 464.6,445.5 468.0,445.2 471.3,444.8 474.7,444.5 478.1,444.1Z"/>
<path d="M489.7,411.6 491.9,410.5 494.1,409.4 496.8,409.2 499.5,408.9 502.2,408.6 502.3,409.4 502.9,408.9 504.2,410.8 507.6,410.4 511.1,409.9 515.1,412.8 519.3,415.8 517.3,417.4 516.1,421.5 513.9,423.9 512.4,426.1 509.5,428.5 508.1,430.3 507.2,432.2 505.5,432.1 505.1,431.2 503.0,428.4 501.9,425.4 498.5,422.3 496.7,421.1 493.9,418.8 492.1,416.3 490.5,415.4 488.4,414.1Z"/>
<path d="M531.5,392.1 528.0,392.8 524.6,393.5 521.1,394.1 517.6,394.8 514.1,395.4 510.6,396.0 507.1,396.6 503.6,397.1 500.1,397.7 496.6,398.2 496.6,400.1 494.9,402.3 491.7,403.5 489.9,404.2 488.0,406.4 486.6,407.6 483.7,409.3 483.6,410.3 482.2,412.7 484.7,412.3 487.2,412.0 489.7,411.6 491.9,410.5 494.1,409.4 496.8,409.2 499.5,408.9 502.2,408.6 502.3,409.4 502.9,408.9 504.2,410.8 507.6,410.4 511.1,409.9 515.1,412.8 519.3,415.8 522.9,415.1 522.8,412.4 525.4,409.5 527.4,408.4 529.4,407.2 530.6,407.7 531.5,404.8 533.6,403.2 535.7,401.7 535.5,398.8 534.3,396.6 533.1,394.5Z"/>
<path d="M496.6,398.2 493.6,398.6 490.5,399.0 487.5,399.4 484.5,399.8 481.1,400.2 477.7,400.5 474.2,400.8 470.8,401.1 467.4,401.4 464.2,401.6 461.0,401.8 457.8,402.0 457.9,403.4 455.2,403.6 452.5,403.9 449.7,404.0 449.3,405.2 448.8,406.4 448.3,408.0 448.4,409.2 447.0,411.6 446.4,414.9 445.1,416.0 448.3,415.8 451.6,415.6 454.8,415.3 458.1,415.1 461.3,414.8 464.6,414.5 467.8,414.2 471.0,413.9 474.2,413.5 476.9,413.2 479.5,413.0 482.2,412.7 483.6,410.3 483.7,409.3 486.6,407.6 488.0,406.4 489.9,404.2 491.7,403.5 494.9,402.3 496.6,400.1Z"/>
<path d="M489.1,385.0 487.4,383.8 486.4,382.9 484.7,384.1 482.3,384.1 479.2,383.3 477.5,381.2 475.3,381.4 475.3,383.0 475.7,383.9 473.5,384.8 472.4,384.6 472.1,386.1 470.5,388.4 469.6,390.6 467.4,389.7 466.4,391.5 464.6,391.3 462.9,393.0 460.0,391.8 457.8,393.5 457.3,393.4 456.8,394.2 456.7,396.0 454.9,396.9 455.2,398.6 454.4,399.2 453.5,398.7 451.6,398.9 451.2,400.2 451.1,402.0 450.1,403.2 449.7,404.0 452.5,403.9 455.2,403.6 457.9,403.4 457.8,402.0 461.0,401.8 464.2,401.6 467.4,401.4 470.8,401.1 474.2,400.8 477.7,400.5 481.1,400.2 484.5,399.8 487.7,397.4 489.9,395.5 492.1,393.3 493.8,391.2 491.6,390.2 490.2,388.5 489.3,387.0Z"/>
<path d="M516.3,373.3 516.0,374.9 512.5,372.9 511.8,376.7 510.5,378.7 509.7,378.7 508.8,381.3 508.4,382.0 507.2,381.5 506.2,380.9 505.7,383.3 504.9,385.8 503.5,388.4 503.7,389.9 502.8,390.6 500.7,391.6 498.5,392.8 495.9,393.5 493.8,391.2 492.1,393.3 489.9,395.5 487.7,397.4 484.5,399.8 487.5,399.4 490.5,399.0 493.6,398.6 496.6,398.2 500.1,397.7 503.6,397.1 507.1,396.6 510.6,396.0 514.1,395.4 517.6,394.8 521.1,394.1 524.6,393.5 528.0,392.8 531.5,392.1 530.7,390.7 530.1,389.4 528.2,389.2 527.5,388.6 528.0,386.9 527.3,384.7 526.8,382.0 525.1,381.6 522.8,380.9 521.8,380.0 520.2,380.0 520.2,378.6 521.1,376.9 520.6,375.8 519.5,375.2 518.2,374.7 517.5,373.5ZM530.5,381.2 530.2,384.1 529.5,386.6 530.1,387.9 530.8,386.7 531.5,384.6 532.4,381.2 532.8,380.1Z"/>
<path d="M528.8,366.9 528.4,368.6 529.4,370.7 530.1,372.6 531.6,373.8 532.4,374.1 533.2,376.7 531.3,377.1 529.4,377.5 528.5,374.3 527.7,371.2 526.8,368.0 527.7,366.9Z"/>
<path d="M505.6,372.1 508.7,371.6 511.7,371.0 514.7,370.5 517.8,369.9 520.8,369.3 523.8,368.6 526.8,368.0 527.7,371.2 528.5,374.3 529.4,377.5 531.3,377.1 533.2,376.7 532.8,380.1 530.5,381.2 529.3,381.1 528.3,379.3 526.3,378.6 525.5,376.3 525.9,373.9 525.1,371.7 526.1,370.7 525.6,369.6 524.1,372.3 524.2,374.6 524.7,378.1 525.6,379.5 526.4,381.4 526.8,382.0 525.1,381.6 522.8,380.9 521.8,380.0 520.2,380.0 520.2,378.6 521.1,376.9 520.6,375.8 519.5,375.2 518.2,374.7 517.5,373.5 516.3,373.3 515.7,372.6 515.4,371.3 513.1,370.9 511.8,372.5 509.9,371.9 508.2,373.7 506.3,376.1Z"/>
</g>
<g fill="#66a6a0">
<path d="M500.7,353.0 498.9,354.2 496.8,355.9 497.4,359.3 497.9,362.7 498.5,366.1 499.1,369.6 499.6,373.2 502.6,372.7 505.6,372.1 508.7,371.6 511.7,371.0 514.7,370.5 517.8,369.9 520.8,369.3 523.8,368.6 526.8,368.0 527.7,366.9 528.8,366.9 530.2,365.6 531.5,363.9 531.8,363.0 530.5,362.2 529.6,360.8 528.5,359.9 528.5,357.7 529.3,356.5 530.2,354.2 527.8,352.9 525.5,350.2 522.5,350.9 519.4,351.5 516.4,352.2 513.3,352.8 510.2,353.4 507.2,353.9 504.1,354.5 501.0,355.0Z"/>
<path d="M500.7,353.0 502.4,351.0 504.0,349.0 504.6,347.4 503.3,344.9 506.1,343.4 508.6,343.3 511.2,343.2 513.3,342.7 515.5,342.1 516.8,340.5 518.3,339.5 517.8,336.9 516.7,335.3 519.0,332.3 521.1,329.1 523.9,326.9 526.3,326.4 528.7,325.8 531.1,325.2 531.7,329.0 532.6,332.8 534.3,335.9 534.9,338.9 535.6,341.9 535.6,344.7 535.7,347.5 536.2,350.3 536.7,353.2 536.1,354.9 536.7,355.6 536.2,357.1 535.5,357.5 535.3,355.9 532.7,355.1 530.2,354.2 527.8,352.9 525.5,350.2 522.5,350.9 519.4,351.5 516.4,352.2 513.3,352.8 510.2,353.4 507.2,353.9 504.1,354.5 501.0,355.0ZM535.3,359.1 537.3,358.5 539.3,357.9 541.4,356.6 543.4,355.3 545.0,353.9 546.5,352.6 543.9,352.6 542.6,354.3 541.0,354.9 539.3,355.6 536.4,356.9 535.5,357.9Z"/>
<path d="M540.8,322.8 541.3,320.3 542.4,319.9 543.6,323.6 544.8,327.3 545.8,330.8 546.9,334.3 548.1,335.8 548.9,336.0 548.6,337.6 546.6,339.2 546.4,339.6 543.2,340.3 540.0,341.0 539.3,340.2 539.2,337.5 539.6,333.4 539.7,330.6 541.2,326.6Z"/>
<path d="M542.4,319.9 543.7,318.8 545.0,315.7 545.4,314.0 544.6,312.2 545.5,310.4 546.5,305.9 547.4,301.4 548.6,301.1 550.4,301.0 552.1,300.8 555.5,302.1 556.5,305.4 557.5,308.8 558.5,312.1 560.5,312.3 561.2,314.5 562.3,315.4 564.8,317.4 563.5,319.0 562.2,320.6 560.9,321.8 559.5,323.1 556.2,323.3 555.4,326.3 553.8,327.9 552.3,329.6 550.1,331.0 549.2,334.0 548.9,336.0 548.1,335.8 546.9,334.3 545.8,330.8 544.8,327.3 543.6,323.6Z"/>
<path d="M548.6,337.6 550.3,338.9 548.7,341.8 550.7,342.4 551.4,344.2 552.6,345.3 555.3,344.4 554.9,343.3 554.3,342.8 553.7,343.0 553.6,342.6 554.5,342.4 555.1,343.2 555.9,345.2 554.0,346.1 552.3,347.4 551.9,345.9 549.7,348.3 548.9,346.9 547.3,344.8 545.0,345.4 541.9,346.1 538.8,346.8 535.7,347.5 535.6,344.7 535.6,341.9 537.8,341.5 540.0,341.0 543.2,340.3 546.4,339.6 546.6,339.2Z"/>
<path d="M549.7,348.3 548.3,349.1 547.9,349.8 546.0,350.7 545.5,348.0 545.0,345.4 547.3,344.8 548.9,346.9Z"/>
<path d="M546.0,350.7 543.1,351.8 540.4,352.7 538.0,354.9 536.7,355.6 536.1,354.9 536.7,353.2 536.2,350.3 535.7,347.5 538.8,346.8 541.9,346.1 545.0,345.4 545.5,348.0Z"/>
<path d="M530.2,354.2 529.3,356.5 528.5,357.7 528.5,359.9 529.6,360.8 530.5,362.2 531.8,363.0 531.5,363.9 530.2,365.6 528.8,366.9 528.3,368.2 528.7,369.3 530.3,370.6 532.5,371.1 532.9,372.9 535.2,369.0 536.4,365.6 536.2,363.7 535.7,360.0 534.2,360.2 534.3,359.1 535.1,358.4 535.3,355.9 532.7,355.1Z"/>
</g>
<g fill="#c9c7c7">
<path d="M489.1,385.0 490.8,384.5 491.0,381.7 492.6,380.7 493.4,380.2 493.3,379.0 494.2,377.6 494.6,376.3 496.1,376.2 497.8,374.0 497.8,372.0 498.1,370.7 498.2,368.8 498.3,367.7 498.5,366.1 499.1,369.6 499.6,373.2 502.6,372.7 505.6,372.1 506.3,376.1 508.2,373.7 509.9,371.9 511.8,372.5 513.1,370.9 515.4,371.3 515.7,372.6 516.3,373.3 516.0,374.9 512.5,372.9 511.8,376.7 510.5,378.7 509.7,378.7 508.8,381.3 508.4,382.0 507.2,381.5 506.2,380.9 505.7,383.3 504.9,385.8 503.5,388.4 503.7,389.9 502.8,390.6 500.7,391.6 498.5,392.8 495.9,393.5 493.8,391.2 491.6,390.2 490.2,388.5 489.3,387.0Z"/>
<path d="M531.1,325.2 533.5,324.6 535.9,324.0 538.4,323.4 540.8,322.8 541.2,326.6 539.7,330.6 539.6,333.4 539.2,337.5 539.3,340.2 540.0,341.0 537.8,341.5 535.6,341.9 534.9,338.9 534.3,335.9 532.6,332.8 531.7,329.0Z"/>
</g>
<path fill="#1580ab" d="M273.4,296.8 272.0,300.0 269.6,302.9 270.5,304.1 273.5,302.0 274.7,298.4 274.7,296.0ZM252.7,373.2 253.5,371.2 254.7,371.7 257.6,372.3 257.4,372.9 254.7,372.7 254.2,375.4 254.8,376.8 254.2,376.6 253.1,373.9 252.6,373.5ZM446.6,452.2 448.5,451.7 450.2,452.4 450.0,453.5 448.0,454.0 446.6,453.4Z"/>
<g fill="#c9c7c7" stroke="#8d9496" stroke-width="0.4">
<polygon points="271.6,442.9 276.5,444.3 281.1,445.3 285.6,445.5 287.6,456.0 290.2,469.4 292.2,470.0 295.1,472.1 297.7,470.6 300.4,472.1 303.9,474.9 307.4,477.2 309.5,479.3 308.9,480.8 306.6,481.4 303.3,479.1 299.8,476.0 296.9,473.2 294.0,471.7 291.0,470.9 288.1,471.1 285.2,470.2 282.5,470.0 280.0,472.1 278.2,474.1 276.7,474.9 277.6,472.3 279.4,469.4 278.2,469.0 275.5,472.3 273.6,475.8 271.2,478.7 268.3,481.6 264.8,483.7 261.3,485.1 257.2,486.3 256.7,485.7 260.7,484.0 264.2,482.6 267.1,480.7 269.5,478.1 270.9,475.8 270.1,474.6 267.7,475.2 264.2,475.6 262.5,473.5 260.2,471.7 258.8,468.8 259.0,466.5 261.3,464.1 264.8,463.0 265.8,461.2 265.4,459.5 262.5,459.7 259.6,458.3 258.8,456.6 260.7,454.8 263.7,455.1 266.0,454.2 265.4,452.5 262.5,450.7 261.9,448.4 264.2,447.8 266.6,445.5 269.5,443.7"/>
<polygon points="252.6,460.1 254.3,460.4 255.7,462.4 254.3,462.0"/>
<polygon points="256.1,470.2 257.8,470.0 258.2,471.5 256.4,471.7"/>
<polygon points="250.2,488.4 253.7,487.5 254.1,488.4 250.6,489.1"/>
<polygon points="273.0,479.9 274.7,477.9 276.5,477.2 275.9,479.1 273.9,481.0"/>
<polygon points="317.6,464.9 318.6,464.0 320.4,464.0 320.9,465.2 320.2,466.3 318.4,466.3"/>
<polygon points="328.7,468.6 330.6,468.3 332.2,470.4 330.6,471.4 329.1,470.4"/>
<polygon points="335.3,471.6 339.2,472.1 339.2,472.8 335.7,472.5"/>
<polygon points="337.2,474.2 338.3,474.2 338.4,475.2 337.3,475.3"/>
<polygon points="340.0,473.7 342.3,473.9 344.2,475.0 343.1,476.3 341.5,475.8 340.4,474.7"/>
<polygon points="346.0,479.5 348.5,479.9 350.8,482.2 353.2,484.2 351.6,486.1 348.5,488.5 346.2,488.9 345.4,486.1 344.6,483.4 345.2,481.1"/>
</g>
</g>
<rect x="624.2" y="258.8" width="253.0" height="17.6" fill="#2580c8"/>
<rect x="624.2" y="276.0" width="253.0" height="1.0" fill="#b5d6e6"/>
<text x="628.0" y="267.9" font-size="9.20" textLength="43.0" lengthAdjust="spacingAndGlyphs">City Name</text>
<text x="726.5" y="267.9" font-size="9.20" textLength="42.7" lengthAdjust="spacingAndGlyphs">Total Sales</text>
<text x="804.3" y="267.9" font-size="9.20" textLength="48.1" lengthAdjust="spacingAndGlyphs">Total Profits</text>
<path d="M628,274.4L631.6,270.8L635.2,274.4Z" fill="#fff"/>
<rect x="722.3" y="258.8" width="0.6" height="17.6" fill="#4f97d3"/>
<rect x="800.1" y="258.8" width="0.6" height="17.6" fill="#4f97d3"/>
<g class="tb">
<clipPath id="tc"><rect x="620" y="276.5" width="262" height="211.7"/></clipPath><g clip-path="url(#tc)">
<rect x="725.9" y="277.2" width="26.6" height="11.6" fill="#72c7ec"/>
<rect x="803.9" y="277.2" width="28.5" height="11.6" fill="#6aaa1c"/>
<rect x="624.2" y="289.0" width="253.0" height="1.0" fill="#a4cfe2"/>
<text x="628.0" y="286.9" font-size="9.30">Abilene</text>
<text x="745.5" y="286.9" font-size="9.30" textLength="51.3" lengthAdjust="spacingAndGlyphs">$1,38,817.30</text>
<text x="829.5" y="286.9" font-size="9.30" textLength="44.3" lengthAdjust="spacingAndGlyphs">$54,302.50</text>
<rect x="725.9" y="290.2" width="15.6" height="11.6" fill="#72c7ec"/>
<rect x="803.9" y="290.2" width="20.9" height="11.6" fill="#6aaa1c"/>
<rect x="624.2" y="302.0" width="253.0" height="1.0" fill="#a4cfe2"/>
<text x="628.0" y="299.6" font-size="9.30">Abington</text>
<text x="752.5" y="299.6" font-size="9.30" textLength="44.3" lengthAdjust="spacingAndGlyphs">$81,552.40</text>
<text x="829.5" y="299.6" font-size="9.30" textLength="44.3" lengthAdjust="spacingAndGlyphs">$39,814.48</text>
<rect x="725.9" y="303.2" width="8.6" height="10.6" fill="#72c7ec"/>
<rect x="803.9" y="303.2" width="10.6" height="10.6" fill="#6aaa1c"/>
<rect x="624.2" y="314.0" width="253.0" height="1.0" fill="#a4cfe2"/>
<text x="628.0" y="312.3" font-size="9.30">Addison (Township)</text>
<text x="752.5" y="312.3" font-size="9.30" textLength="44.3" lengthAdjust="spacingAndGlyphs">$45,131.20</text>
<text x="829.5" y="312.3" font-size="9.30" textLength="44.3" lengthAdjust="spacingAndGlyphs">$20,099.46</text>
<rect x="725.9" y="315.2" width="9.8" height="11.6" fill="#72c7ec"/>
<rect x="803.9" y="315.2" width="5.3" height="11.6" fill="#6aaa1c"/>
<rect x="624.2" y="327.0" width="253.0" height="1.0" fill="#a4cfe2"/>
<text x="628.0" y="325.0" font-size="9.30">Akron</text>
<text x="752.5" y="325.0" font-size="9.30" textLength="44.3" lengthAdjust="spacingAndGlyphs">$51,214.80</text>
<text x="829.5" y="325.0" font-size="9.30" textLength="44.3" lengthAdjust="spacingAndGlyphs">$10,108.42</text>
<rect x="725.9" y="328.2" width="10.3" height="11.6" fill="#72c7ec"/>
<rect x="803.9" y="328.2" width="8.3" height="11.6" fill="#6aaa1c"/>
<rect x="624.2" y="340.0" width="253.0" height="1.0" fill="#a4cfe2"/>
<text x="628.0" y="337.7" font-size="9.30">Alafaya</text>
<text x="752.5" y="337.7" font-size="9.30" textLength="44.3" lengthAdjust="spacingAndGlyphs">$53,767.50</text>
<text x="829.5" y="337.7" font-size="9.30" textLength="44.3" lengthAdjust="spacingAndGlyphs">$15,903.32</text>
<rect x="725.9" y="341.2" width="10.2" height="10.6" fill="#72c7ec"/>
<rect x="803.9" y="341.2" width="11.9" height="10.6" fill="#6aaa1c"/>
<rect x="624.2" y="352.0" width="253.0" height="1.0" fill="#a4cfe2"/>
<text x="628.0" y="350.4" font-size="9.30">Alameda</text>
<text x="752.5" y="350.4" font-size="9.30" textLength="44.3" lengthAdjust="spacingAndGlyphs">$53,439.20</text>
<text x="829.5" y="350.4" font-size="9.30" textLength="44.3" lengthAdjust="spacingAndGlyphs">$22,680.04</text>
<rect x="725.9" y="353.2" width="35.9" height="11.6" fill="#72c7ec"/>
<rect x="803.9" y="353.2" width="45.6" height="11.6" fill="#6aaa1c"/>
<rect x="624.2" y="365.0" width="253.0" height="1.0" fill="#a4cfe2"/>
<text x="628.0" y="363.2" font-size="9.30">Albany</text>
<text x="745.5" y="363.2" font-size="9.30" textLength="51.3" lengthAdjust="spacingAndGlyphs">$1,87,445.90</text>
<text x="829.5" y="363.2" font-size="9.30" textLength="44.3" lengthAdjust="spacingAndGlyphs">$86,791.06</text>
<rect x="725.9" y="366.2" width="12.4" height="11.6" fill="#72c7ec"/>
<rect x="803.9" y="366.2" width="11.7" height="11.6" fill="#6aaa1c"/>
<rect x="624.2" y="378.0" width="253.0" height="1.0" fill="#a4cfe2"/>
<text x="628.0" y="375.9" font-size="9.30">Albuquerque</text>
<text x="752.5" y="375.9" font-size="9.30" textLength="44.3" lengthAdjust="spacingAndGlyphs">$64,581.30</text>
<text x="829.5" y="375.9" font-size="9.30" textLength="44.3" lengthAdjust="spacingAndGlyphs">$22,331.17</text>
<rect x="725.9" y="379.2" width="3.8" height="11.6" fill="#72c7ec"/>
<rect x="803.9" y="379.2" width="3.9" height="11.6" fill="#6aaa1c"/>
<rect x="624.2" y="391.0" width="253.0" height="1.0" fill="#a4cfe2"/>
<text x="628.0" y="388.6" font-size="9.30">Alexandria</text>
<text x="752.5" y="388.6" font-size="9.30" textLength="44.3" lengthAdjust="spacingAndGlyphs">$19,684.60</text>
<text x="834.5" y="388.6" font-size="9.30" textLength="39.3" lengthAdjust="spacingAndGlyphs">$7,499.64</text>
<rect x="725.9" y="392.2" width="26.6" height="10.6" fill="#72c7ec"/>
<rect x="803.9" y="392.2" width="27.9" height="10.6" fill="#6aaa1c"/>
<rect x="624.2" y="403.0" width="253.0" height="1.0" fill="#a4cfe2"/>
<text x="628.0" y="401.3" font-size="9.30">Algonquin (Township)</text>
<text x="745.5" y="401.3" font-size="9.30" textLength="51.3" lengthAdjust="spacingAndGlyphs">$1,38,830.70</text>
<text x="829.5" y="401.3" font-size="9.30" textLength="44.3" lengthAdjust="spacingAndGlyphs">$53,130.26</text>
<rect x="725.9" y="404.2" width="7.8" height="11.6" fill="#72c7ec"/>
<rect x="803.9" y="404.2" width="6.0" height="11.6" fill="#6aaa1c"/>
<rect x="624.2" y="416.0" width="253.0" height="1.0" fill="#a4cfe2"/>
<text x="628.0" y="414.0" font-size="9.30">Alhambra</text>
<text x="752.5" y="414.0" font-size="9.30" textLength="44.3" lengthAdjust="spacingAndGlyphs">$40,715.90</text>
<text x="829.5" y="414.0" font-size="9.30" textLength="44.3" lengthAdjust="spacingAndGlyphs">$11,516.43</text>
<rect x="725.9" y="417.2" width="2.1" height="11.6" fill="#72c7ec"/>
<rect x="803.9" y="417.2" width="2.5" height="11.6" fill="#6aaa1c"/>
<rect x="624.2" y="429.0" width="253.0" height="1.0" fill="#a4cfe2"/>
<text x="628.0" y="426.7" font-size="9.30">Aliso Viejo</text>
<text x="752.5" y="426.7" font-size="9.30" textLength="44.3" lengthAdjust="spacingAndGlyphs">$10,760.20</text>
<text x="834.5" y="426.7" font-size="9.30" textLength="39.3" lengthAdjust="spacingAndGlyphs">$4,842.09</text>
<rect x="725.9" y="430.2" width="12.8" height="10.6" fill="#72c7ec"/>
<rect x="803.9" y="430.2" width="17.6" height="10.6" fill="#6aaa1c"/>
<rect x="624.2" y="441.0" width="253.0" height="1.0" fill="#a4cfe2"/>
<text x="628.0" y="439.4" font-size="9.30">Allen</text>
<text x="752.5" y="439.4" font-size="9.30" textLength="44.3" lengthAdjust="spacingAndGlyphs">$66,651.60</text>
<text x="829.5" y="439.4" font-size="9.30" textLength="44.3" lengthAdjust="spacingAndGlyphs">$33,446.00</text>
<rect x="725.9" y="442.2" width="34.2" height="11.6" fill="#72c7ec"/>
<rect x="803.9" y="442.2" width="33.1" height="11.6" fill="#6aaa1c"/>
<rect x="624.2" y="454.0" width="253.0" height="1.0" fill="#a4cfe2"/>
<text x="628.0" y="452.1" font-size="9.30">Allentown</text>
<text x="745.5" y="452.1" font-size="9.30" textLength="51.3" lengthAdjust="spacingAndGlyphs">$1,78,333.90</text>
<text x="829.5" y="452.1" font-size="9.30" textLength="44.3" lengthAdjust="spacingAndGlyphs">$63,059.26</text>
<rect x="725.9" y="455.2" width="14.5" height="11.6" fill="#72c7ec"/>
<rect x="803.9" y="455.2" width="17.1" height="11.6" fill="#6aaa1c"/>
<rect x="624.2" y="467.0" width="253.0" height="1.0" fill="#a4cfe2"/>
<text x="628.0" y="464.8" font-size="9.30">Aloha</text>
<text x="752.5" y="464.8" font-size="9.30" textLength="44.3" lengthAdjust="spacingAndGlyphs">$75,723.40</text>
<text x="829.5" y="464.8" font-size="9.30" textLength="44.3" lengthAdjust="spacingAndGlyphs">$32,513.63</text>
<rect x="725.9" y="468.2" width="20.1" height="11.6" fill="#72c7ec"/>
<rect x="803.9" y="468.2" width="20.1" height="11.6" fill="#6aaa1c"/>
<rect x="624.2" y="480.0" width="253.0" height="1.0" fill="#a4cfe2"/>
<text x="628.0" y="477.5" font-size="9.30">Alpharetta</text>
<text x="745.5" y="477.5" font-size="9.30" textLength="51.3" lengthAdjust="spacingAndGlyphs">$1,04,721.00</text>
<text x="829.5" y="477.5" font-size="9.30" textLength="44.3" lengthAdjust="spacingAndGlyphs">$38,330.70</text>
<rect x="725.9" y="481.2" width="11.9" height="10.6" fill="#72c7ec"/>
<rect x="803.9" y="481.2" width="9.7" height="10.6" fill="#6aaa1c"/>
<rect x="624.2" y="492.0" width="253.0" height="1.0" fill="#a4cfe2"/>
<text x="628.0" y="490.3" font-size="9.30">Amarillo</text>
<text x="752.5" y="490.3" font-size="9.30" textLength="44.3" lengthAdjust="spacingAndGlyphs">$61,908.00</text>
<text x="829.5" y="490.3" font-size="9.30" textLength="44.3" lengthAdjust="spacingAndGlyphs">$18,405.77</text>
</g>
<rect x="624.2" y="488.0" width="253.0" height="1.0" fill="#a4cfe2"/>
<text x="628.0" y="497.8" font-size="9.30" textLength="21.5" lengthAdjust="spacingAndGlyphs" font-weight="bold">Total</text>
<text x="727.3" y="497.9" font-size="9.30" textLength="69.1" lengthAdjust="spacingAndGlyphs" font-weight="bold">$7,13,81,947.40</text>
<text x="804.7" y="497.9" font-size="9.30" textLength="69.1" lengthAdjust="spacingAndGlyphs" font-weight="bold">$2,68,97,858.19</text>
</g>
<rect x="885.3" y="259.0" width="6.0" height="235.0" fill="#f0f0f0"/>
<rect x="885.3" y="277.7" width="6.0" height="9.2" fill="#c6c6c6"/>
<path d="M886.1,268.8L888.3,266.4L890.5,268.8M886.1,483.2L888.3,485.6L890.5,483.2" fill="none" stroke="#404040" stroke-width="0.9"/>
</svg>
</body></html>
